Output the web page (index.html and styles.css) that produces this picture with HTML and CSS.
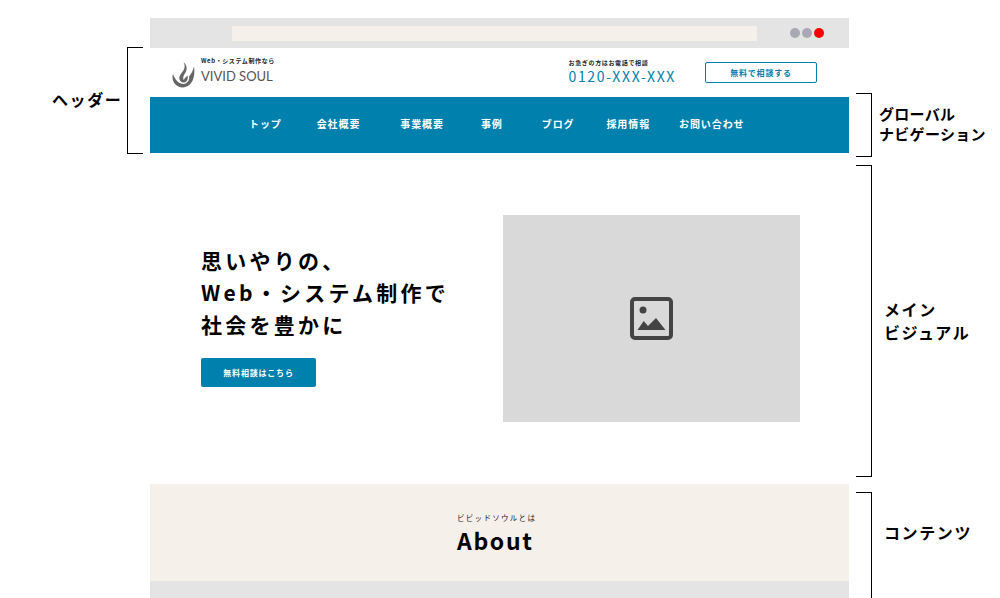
FILE: index.html
```html
<!DOCTYPE html>
<html lang="ja">
<head>
  <meta charset="utf-8">
  <title>Wireframe</title>
  <link rel="stylesheet" href="styles.css">
</head>
<body>
  <div class="canvas">
    <!-- annotations round the wireframe -->
    <div class="bracket bracket-left bracket-header"></div>
    <div class="note note-header">ヘッダー</div>
    <div class="bracket bracket-right bracket-nav"></div>
    <div class="note note-nav">グローバル<br>ナビゲーション</div>
    <div class="bracket bracket-right bracket-main"></div>
    <div class="note note-main">メイン<br>ビジュアル</div>
    <div class="bracket bracket-right bracket-contents"></div>
    <div class="note note-contents">コンテンツ</div>

    <div class="site">
      <div class="browser">
        <div class="urlbar"></div>
        <div class="dots">
          <span class="dot"></span>
          <span class="dot"></span>
          <span class="dot dot-red"></span>
        </div>
      </div>

      <header class="header">
        <div class="logo">
          <svg class="logo-mark" width="24" height="26" viewBox="0 0 24 26">
            <path fill="#666" d="M1 12C-1 18 3 25 11 25.500C18 25 24 18 22 4.500C21 9 19 12 17 14.500C18 18 15 21.500 11.500 22C7 22 3 18 1 12z"/>
            <path fill="#666" d="M11.500 0C14 5 12 8 9.500 11C7.500 13.500 6.500 16 8 18.500C9 20 10.500 20.500 12 20.500C15 20 16.500 17 15.500 13.500C14.500 15 12.500 16 11.500 18C10.500 15 12 13 13.500 10.500C15.500 7 15 3 11.500 0z"/>
          </svg>
          <div class="logo-text">
            <div class="logo-sub">Web・システム制作なら</div>
            <div class="logo-name">VIVID SOUL</div>
          </div>
        </div>
        <div class="header-right">
          <div class="tel">
            <div class="tel-sub">お急ぎの方はお電話で相談</div>
            <div class="tel-num">0120-XXX-XXX</div>
          </div>
          <a class="btn-outline">無料で相談する</a>
        </div>
      </header>

      <nav class="nav">
        <a class="nav-item">トップ</a>
        <a class="nav-item">会社概要</a>
        <a class="nav-item">事業概要</a>
        <a class="nav-item">事例</a>
        <a class="nav-item">ブログ</a>
        <a class="nav-item">採用情報</a>
        <a class="nav-item">お問い合わせ</a>
      </nav>

      <section class="hero">
        <div class="hero-text">
          <h1 class="hero-title">思いやりの、<br>Web・システム制作で<br>社会を豊かに</h1>
          <a class="btn-solid">無料相談はこちら</a>
        </div>
        <div class="hero-image">
          <svg class="hero-icon" width="43" height="43" viewBox="0 0 43 43">
            <rect x="2" y="2" width="39" height="39" rx="3" fill="none" stroke="#444" stroke-width="4"/>
            <circle cx="13" cy="13" r="3.500" fill="#444"/>
            <path fill="#444" d="M7.500 33L13.700 24L18 29L26 21L35.500 33z"/>
          </svg>
        </div>
      </section>

      <section class="about">
        <div class="about-sub">ビビッドソウルとは</div>
        <h2 class="about-title">About</h2>
      </section>

      <div class="footer-strip"></div>
    </div>
  </div>
</body>
</html>
```

FILE: styles.css
```css
* {
  box-sizing: border-box;
}

html, body {
  margin: 0;
  height: 598px;
  overflow: hidden;
  background-color: #fff;
}

body {
  font-family: "Noto Sans CJK JP", "Noto Sans", sans-serif;
  color: #000;
}

.canvas {
  position: relative;
  width: 1000px;
  height: 598px;
  padding: 18px 151px 0 150px;
}

/* annotations */
.bracket {
  position: absolute;
  width: 16px;
  border: 1px solid #000;
}

.bracket-left {
  border-right: none;
}

.bracket-right {
  border-left: none;
}

.bracket-header {
  left: 127px;
  top: 47px;
  height: 107px;
}

.bracket-nav {
  left: 856px;
  top: 93px;
  height: 64px;
}

.bracket-main {
  left: 856px;
  top: 165px;
  height: 312px;
}

.bracket-contents {
  left: 856px;
  top: 492px;
  height: 120px;
}

.note {
  position: absolute;
  font-size: 16px;
  font-weight: 700;
  letter-spacing: 1.600px;
  white-space: nowrap;
}

.note-header {
  left: 52px;
  top: 87px;
  line-height: 24px;
}

.note-nav {
  left: 879px;
  top: 104px;
  font-size: 15px;
  line-height: 20px;
  letter-spacing: .3px;
}

.note-main {
  left: 884px;
  top: 298px;
  line-height: 23px;
}

.note-contents {
  left: 884px;
  top: 520px;
  line-height: 24px;
}

/* wireframe */
.site {
  display: flex;
  flex-direction: column;
  width: 699px;
  height: 580px;
}

.browser {
  display: flex;
  align-items: center;
  justify-content: space-between;
  flex: none;
  height: 30px;
  padding: 0 25px 0 82px;
  background-color: #e4e4e4;
}

.urlbar {
  width: 525px;
  height: 15px;
  background-color: #f5f0ea;
}

.dots {
  display: flex;
  gap: 2px;
}

.dot {
  width: 10px;
  height: 10px;
  border-radius: 50%;
  background-color: #a9a9b5;
}

.dot-red {
  background-color: #ff0000;
}

.header {
  display: flex;
  align-items: center;
  justify-content: space-between;
  flex: none;
  height: 49px;
  padding: 0 32px 0 22px;
}

.logo {
  display: flex;
  align-items: center;
  gap: 5px;
}

.logo-mark {
  margin-top: 5px;
}

.logo-text {
  margin-bottom: 4px;
}

.logo-sub {
  margin-bottom: 2px;
  font-size: 6px;
  font-weight: 700;
  line-height: 10px;
  letter-spacing: .6px;
  color: #222;
}

.logo-name {
  font-family: Lato, "Noto Sans", sans-serif;
  font-size: 13px;
  line-height: 17px;
  color: #555;
}

.header-right {
  display: flex;
  align-items: center;
  gap: 29px;
}

.tel {
  margin-bottom: 2px;
}

.tel-sub {
  margin-bottom: 1px;
  font-size: 6px;
  font-weight: 700;
  line-height: 9px;
  letter-spacing: .65px;
  color: #222;
}

.tel-num {
  font-size: 14px;
  line-height: 17px;
  letter-spacing: 1.650px;
  color: #0080ad;
}

.btn-outline {
  display: block;
  width: 112px;
  height: 21px;
  border: 1px solid #0080ad;
  border-radius: 2px;
  font-size: 8px;
  font-weight: 700;
  line-height: 19px;
  letter-spacing: .8px;
  text-align: center;
  color: #0080ad;
}

.nav {
  display: flex;
  align-items: center;
  flex: none;
  height: 56px;
  padding: 0 0 4px 99px;
  background-color: #0080ad;
}

.nav-item {
  font-size: 10px;
  font-weight: 700;
  letter-spacing: .9px;
  color: #fff;
}

.nav-item:nth-child(1) { margin-right: 35px; }
.nav-item:nth-child(2) { margin-right: 40px; }
.nav-item:nth-child(3) { margin-right: 37px; }
.nav-item:nth-child(4) { margin-right: 39px; }
.nav-item:nth-child(5) { margin-right: 32px; }
.nav-item:nth-child(6) { margin-right: 29px; }

.hero {
  display: flex;
  align-items: center;
  justify-content: space-between;
  flex: none;
  height: 331px;
  padding: 0 49px 0 51px;
}

.hero-text {
  margin-bottom: 6px;
}

.hero-title {
  margin: 0 0 18px;
  font-size: 21px;
  font-weight: 700;
  line-height: 32px;
  letter-spacing: 3.250px;
}

.btn-solid {
  display: block;
  width: 115px;
  height: 29px;
  border-radius: 2px;
  background-color: #0080ad;
  font-size: 8px;
  font-weight: 700;
  line-height: 29px;
  letter-spacing: .8px;
  text-align: center;
  color: #fff;
}

.hero-image {
  display: flex;
  align-items: center;
  justify-content: center;
  width: 297px;
  height: 207px;
  background-color: #d9d9d9;
}

.about {
  flex: none;
  height: 97px;
  padding: 28px 0 0 307px;
  background-color: #f5f0ea;
}

.about-sub {
  font-size: 7.500px;
  line-height: 11px;
  letter-spacing: 1.300px;
  color: #222;
}

.about-title {
  margin: 2px 0 0;
  font-size: 23px;
  font-weight: 700;
  line-height: 30px;
  letter-spacing: 1.650px;
}

.footer-strip {
  flex: 1;
  background-color: #e4e4e4;
}
```
